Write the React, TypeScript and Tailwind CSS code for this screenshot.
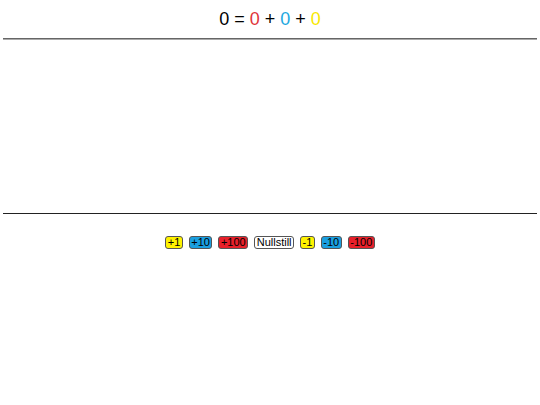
import React, { useState } from 'react';

const steps = [
  { label: '+1', delta: 1, cls: 'bg-[#fff200]' },
  { label: '+10', delta: 10, cls: 'bg-[#1a9fe0]' },
  { label: '+100', delta: 100, cls: 'bg-[#e8202a]' },
];

const App = () => {
  const [ones, setOnes] = useState(0);
  const [tens, setTens] = useState(0);
  const [hundreds, setHundreds] = useState(0);

  const bump = (delta: number) => {
    const abs = Math.abs(delta);
    const sign = delta < 0 ? -1 : 1;
    if (abs === 1) setOnes(v => v + sign);
    if (abs === 10) setTens(v => v + sign * 10);
    if (abs === 100) setHundreds(v => v + sign * 100);
  };

  const reset = () => {
    setOnes(0);
    setTens(0);
    setHundreds(0);
  };

  const btn = 'h-[13px] px-[1.5px] border border-[#555] rounded-[3px] text-[11px] leading-[11px] text-black';

  return (
    <div className="min-h-screen bg-white font-['Liberation_Sans',Arial,sans-serif]">
      <div className="h-[38px] flex items-center justify-center text-[18px]">
        <span className="text-black">{ones + tens + hundreds}</span>
        <span className="mx-[5px]">=</span>
        <span className="text-[#e0353a]">{hundreds}</span>
        <span className="mx-[5px]">+</span>
        <span className="text-[#1ea8e0]">{tens}</span>
        <span className="mx-[5px]">+</span>
        <span className="text-[#f8e800]">{ones}</span>
      </div>
      <hr className="mx-[3px] border-0 border-t border-b border-t-[#666] border-b-[#aaa]" />
      <div className="h-[173px]" />
      <hr className="mx-[3px] border-0 border-t border-t-[#222]" />
      <div className="flex justify-center gap-[6px] pt-[22px]">
        {steps.map(s => (
          <button key={s.label} className={`${btn} ${s.cls}`} onClick={() => bump(s.delta)}>
            {s.label}
          </button>
        ))}
        <button className={`${btn} bg-white`} onClick={reset}>Nullstill</button>
        <button className={`${btn} bg-[#fff200]`} onClick={() => bump(-1)}>-1</button>
        <button className={`${btn} bg-[#1a9fe0]`} onClick={() => bump(-10)}>-10</button>
        <button className={`${btn} bg-[#e8202a]`} onClick={() => bump(-100)}>-100</button>
      </div>
    </div>
  );
};

export default App;
